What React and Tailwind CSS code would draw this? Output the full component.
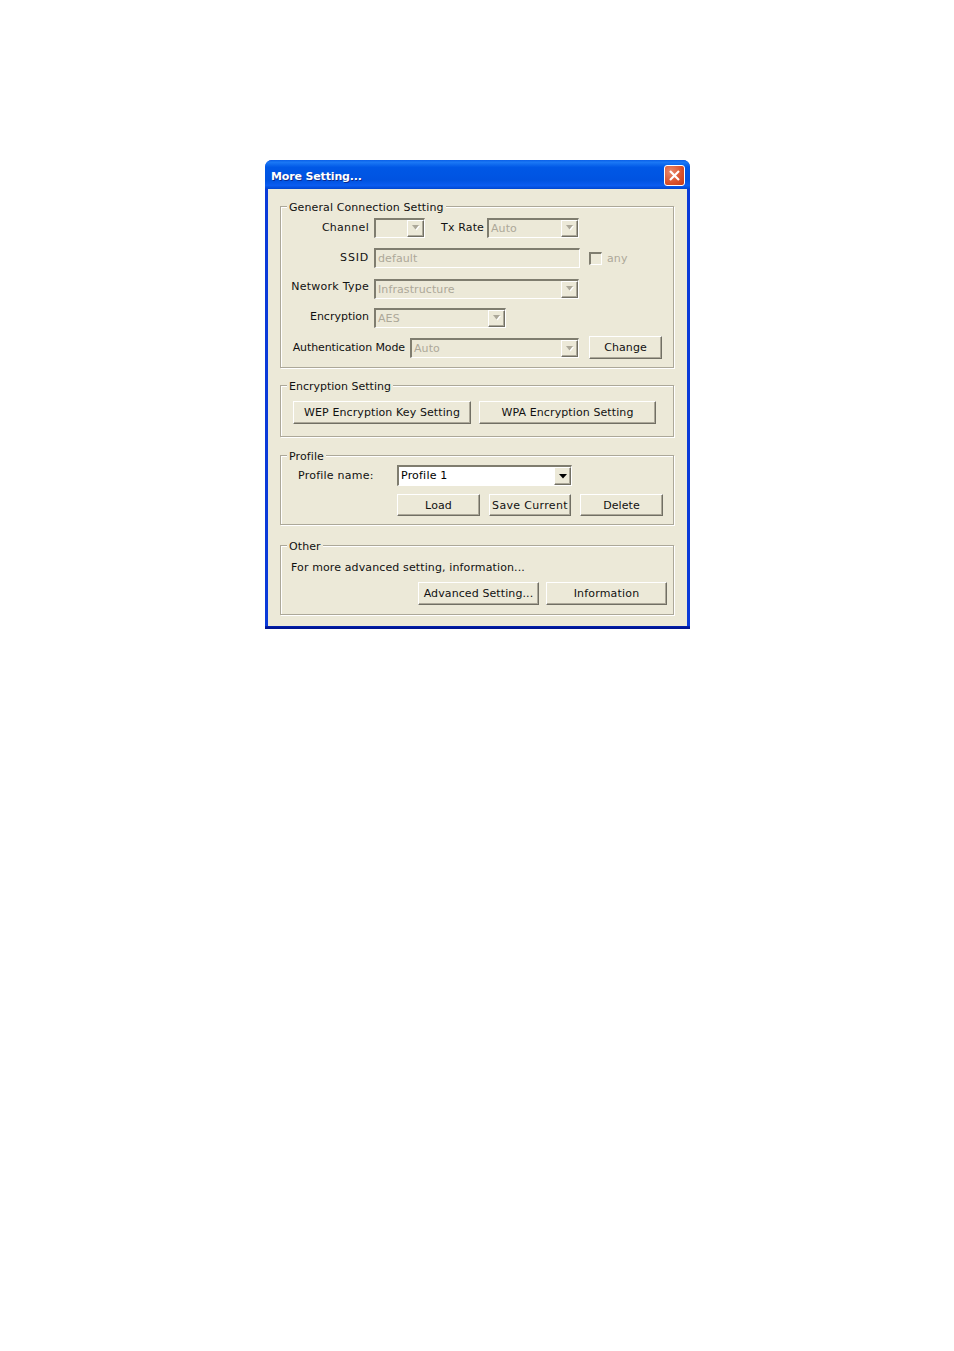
import React from "react";

function Group({ title, className, legendClass = "", children }) {
  return (
    <div className={"relative border border-[#aca899] shadow-[1px_1px_0_#fff,inset_1px_1px_0_#fff] " + className}>
      <span className={"absolute left-[6px] top-[-6px] bg-[#ece9d8] px-[2px] leading-[13px] whitespace-nowrap " + legendClass}>{title}</span>
      {children}
    </div>
  );
}

function Btn({ className, children }) {
  return (
    <div className={"flex items-center justify-center whitespace-nowrap bg-[#ece9d8] border-t border-l border-t-white border-l-white border-r border-b border-r-[#716f64] border-b-[#716f64] shadow-[inset_-1px_-1px_0_#aca899] " + className}>
      {children}
    </div>
  );
}

function Arrow({ dark }) {
  return (
    <div className="flex h-full w-[17px] shrink-0 items-center justify-center border-t border-l border-t-white border-l-white border-r border-b border-r-[#716f64] border-b-[#716f64] shadow-[inset_-1px_-1px_0_#aca899] bg-[#ece9d8]">
      {dark ? (
        <svg className="ml-[1px]" width="8" height="5" viewBox="0 0 8 5"><path d="M0 0h8L4 4.5z" fill="#000" /></svg>
      ) : (
        <svg width="8" height="6" viewBox="0 0 8 6">
          <path d="M1 1h7L4.5 5.5z" fill="#fff" />
          <path d="M0 0h7L3.5 4.5z" fill="#aca899" />
        </svg>
      )}
    </div>
  );
}

function Select({ className, value, dark }) {
  return (
    <div className={"flex shrink-0 items-stretch border-t-2 border-l-2 border-t-[#7f7d6f] border-l-[#7f7d6f] border-r border-b border-r-white border-b-white " + (dark ? "bg-white text-black " : "text-[#aca899] ") + className}>
      <div className="flex-1 pl-[2px] leading-[17px] overflow-hidden whitespace-nowrap">{value}</div>
      <Arrow dark={dark} />
    </div>
  );
}

function Label({ className, children }) {
  return <div className={"shrink-0 text-right whitespace-nowrap " + className}>{children}</div>;
}

export default function App() {
  return (
    <div className="min-h-[1351px] bg-white pl-[265px] pt-[160px] text-[11px] tracking-[0.1px] text-[#111] font-['DejaVu_Sans','Liberation_Sans',sans-serif]">
      <div className="h-[469px] w-[425px] overflow-hidden rounded-t-[7px] bg-[linear-gradient(180deg,#0a3ad8_0%,#0a3ad8_99.3%,#0019a0_99.5%,#00138c_100%)] flex flex-col">
        <div className="flex h-[29px] shrink-0 items-center justify-between pl-[6px] pr-[5px] pt-[3px] bg-[linear-gradient(180deg,#0a5fe8_0%,#1a78f5_8%,#0058e6_25%,#0053e1_70%,#0a5cf0_88%,#0046d0_100%)]">
          <span className="mt-[2px] text-[11px] font-bold text-white tracking-[-0.15px] [text-shadow:1px_1px_0_#0a2a90]">More Setting...</span>
          <div className="flex h-[21px] w-[21px] -mt-[1px] items-center justify-center rounded-[3px] border border-white bg-[radial-gradient(circle_at_30%_30%,#ea8a6c,#d9512c_60%,#c13a18)]">
            <svg width="13" height="13" viewBox="0 0 13 13"><path d="M2 2l9 9M11 2l-9 9" stroke="#fff" strokeWidth="2.2" /></svg>
          </div>
        </div>
        <div className="mx-[3px] mb-[3px] flex flex-1 flex-col bg-[#ece9d8] pl-[12px] pt-[17px]">
          <Group title="General Connection Setting" className="h-[162px] w-[394px] pt-[11px]">
            <div className="flex h-[19px] items-center">
              <Label className="w-[88px] mt-[2px] tracking-[0.28px]">Channel</Label>
              <Select className="ml-[5px] h-[20px] w-[51px]" value="" />
              <Label className="ml-[16px] w-[43px] mt-[2px] tracking-[0.14px]">Tx Rate</Label>
              <Select className="ml-[3px] h-[20px] w-[92px]" value="Auto" />
            </div>
            <div className="mt-[11px] flex h-[20px] items-center">
              <Label className="w-[88px] tracking-[0.8px]">SSID</Label>
              <div className="ml-[5px] h-[20px] w-[206px] shrink-0 border-t-2 border-l-2 border-t-[#7f7d6f] border-l-[#7f7d6f] border-r border-b border-r-white border-b-white pl-[2px] leading-[17px] text-[#aca899]">default</div>
              <div className="ml-[9px] h-[13px] w-[13px] border-t-2 border-l-2 border-t-[#7f7d6f] border-l-[#7f7d6f] border-r border-b border-r-white border-b-white" />
              <span className="ml-[5px] mt-[2px] text-[#aca899]">any</span>
            </div>
            <div className="mt-[11px] flex h-[19px] items-center">
              <Label className="w-[88px] -mt-[2px] tracking-[0.25px]">Network Type</Label>
              <Select className="ml-[5px] h-[20px] w-[205px]" value="Infrastructure" />
            </div>
            <div className="mt-[10px] flex h-[19px] items-center">
              <Label className="w-[88px] -mt-[1px] tracking-[0px]">Encryption</Label>
              <Select className="ml-[5px] h-[20px] w-[132px]" value="AES" />
            </div>
            <div className="mt-[9px] flex h-[22px] items-center">
              <Label className="w-[124px] mt-[2px] tracking-[-0.1px]">Authentication Mode</Label>
              <Select className="ml-[5px] mt-[2px] h-[20px] w-[169px]" value="Auto" />
              <Btn className="ml-[10px] h-[23px] w-[73px] pt-[3px]">Change</Btn>
            </div>
          </Group>
          <Group title="Encryption Setting" legendClass="tracking-[0px]" className="mt-[17px] h-[52px] w-[394px] pt-[15px]">
            <div className="flex pl-[12px] gap-[8px]">
              <Btn className="h-[23px] w-[178px] pt-[2px]">WEP Encryption Key Setting</Btn>
              <Btn className="h-[23px] w-[177px] pt-[2px]">WPA Encryption Setting</Btn>
            </div>
          </Group>
          <Group title="Profile" className="mt-[18px] h-[70px] w-[394px] pt-[9px]">
            <div className="flex h-[21px] items-center">
              <span className="ml-[17px] mt-[2px] w-[99px] shrink-0 whitespace-nowrap tracking-[0.23px]">Profile name:</span>
              <Select className="h-[21px] w-[175px] tracking-[0.2px]" value="Profile 1" dark />
            </div>
            <div className="mt-[8px] flex ml-[116px] gap-[9px]">
              <Btn className="h-[22px] w-[83px] pt-[3px]">Load</Btn>
              <Btn className="h-[22px] w-[82px] pt-[3px] tracking-[0.33px]">Save Current</Btn>
              <Btn className="h-[22px] w-[83px] pt-[3px]">Delete</Btn>
            </div>
          </Group>
          <Group title="Other" className="mt-[20px] h-[70px] w-[394px] pt-[15px]">
            <div className="ml-[10px] h-[14px] leading-[14px] whitespace-nowrap tracking-[0.12px]">For more advanced setting, information...</div>
            <div className="mt-[7px] flex ml-[137px] gap-[7px]">
              <Btn className="h-[23px] w-[121px] pt-[2px]">Advanced Setting...</Btn>
              <Btn className="h-[23px] w-[121px] pt-[2px] tracking-[0.18px]">Information</Btn>
            </div>
          </Group>
        </div>
      </div>
    </div>
  );
}
